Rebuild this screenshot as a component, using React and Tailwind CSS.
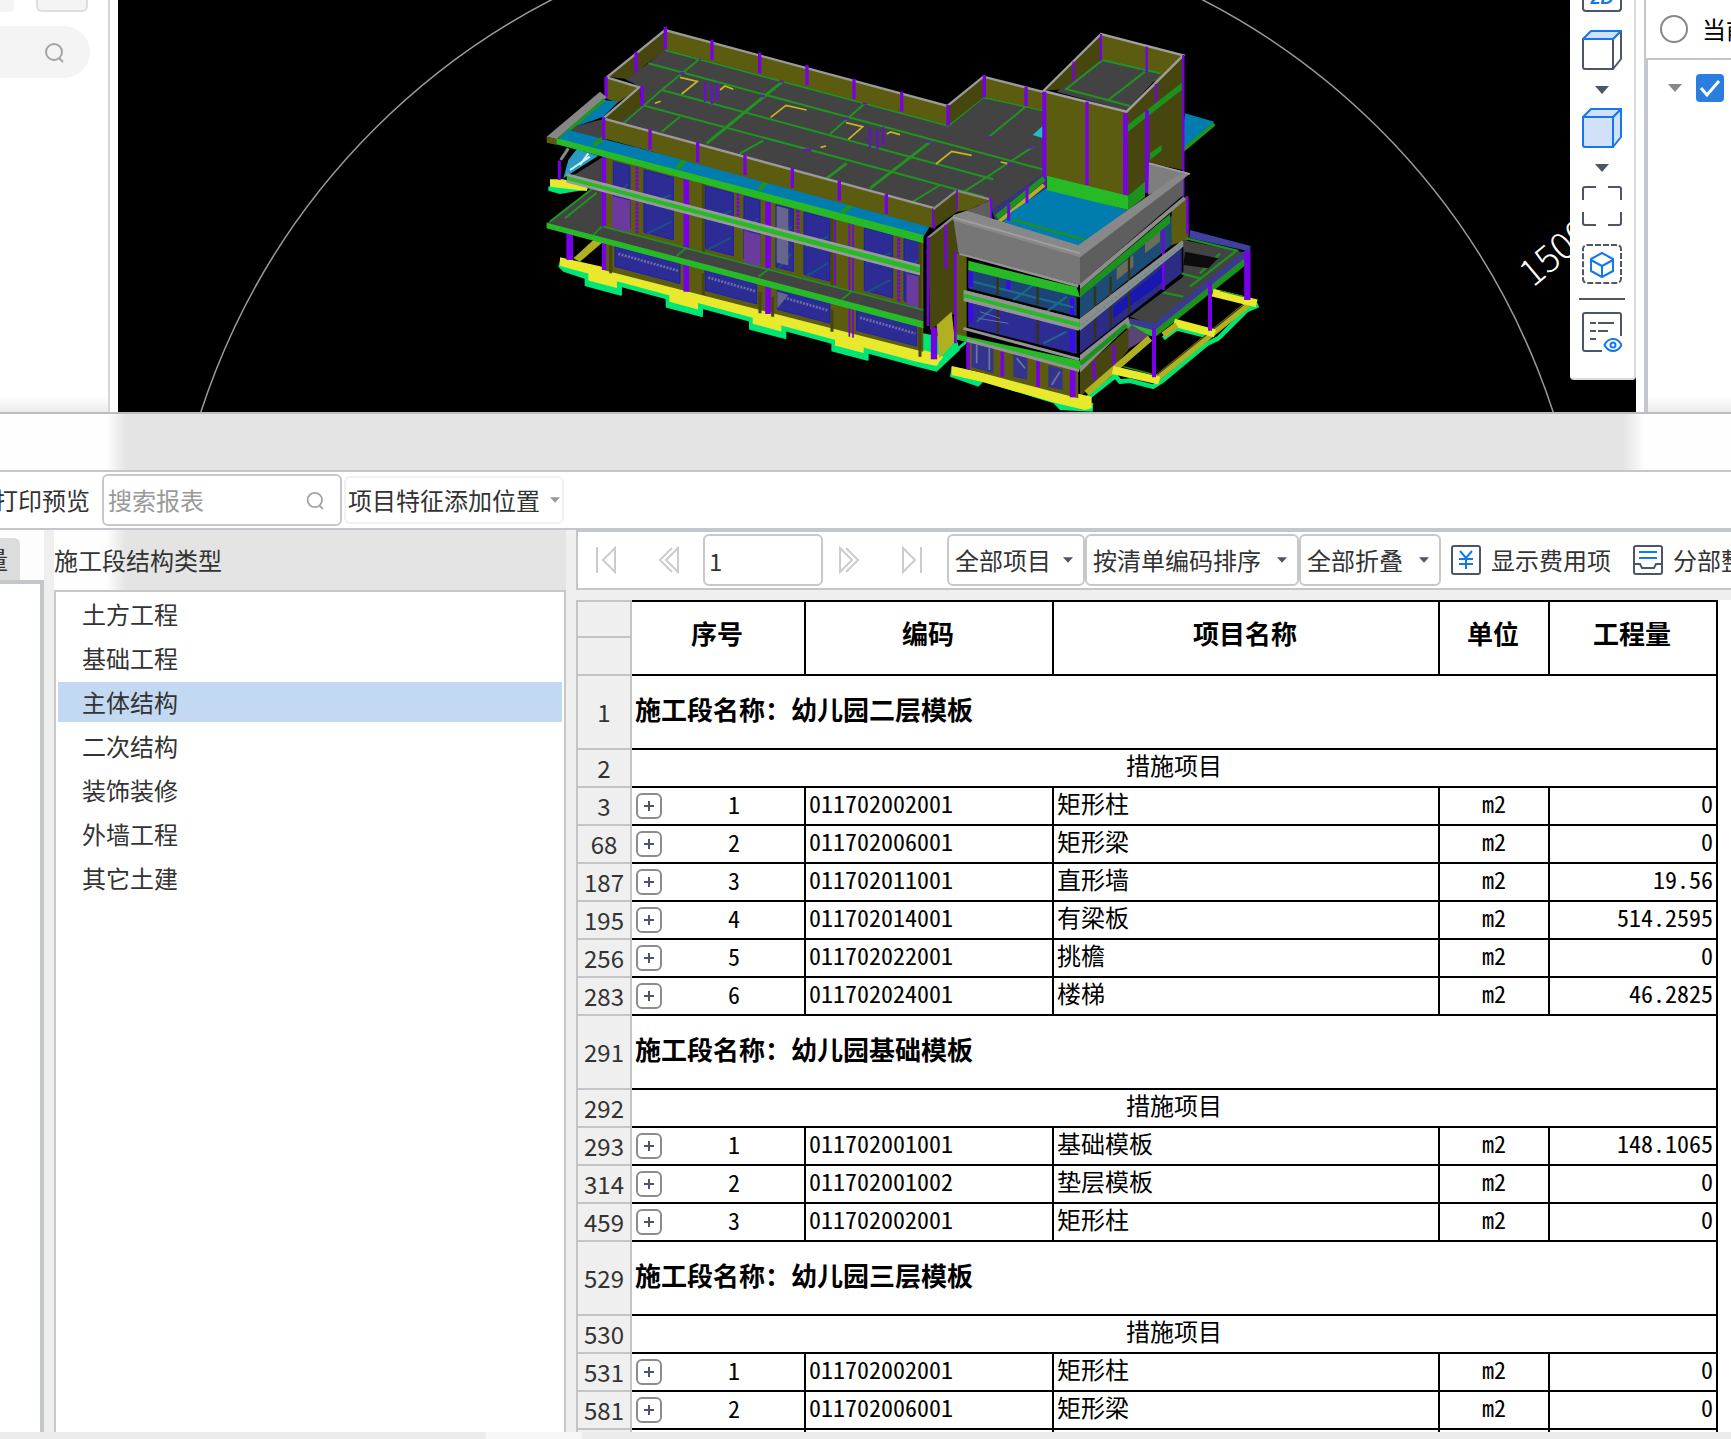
const RoofWalls = () => (
  <g>
    {/* main roof slab */}
    <polygon points="375,118 1225,345 1330,262 1515,300 1515,495 1360,600 1250,560 1180,600 200,330 305,285 300,230 255,207 325,160" fill="#434343" />
    <g stroke="#1f941f" strokeWidth="6" fill="none">
      <path d="M375,120 L1225,347 L1330,262 L1515,302" />
      <path d="M325,160 L1515,480" />
      <path d="M365,240 L1360,508" />
      <path d="M305,285 L1110,500 L1330,560" />
      <path d="M475,150 L365,240 L250,340" strokeWidth="5" />
      <path d="M420,320 L365,365" />
      <path d="M728,214 L500,400" strokeWidth="9" />
      <path d="M975,280 L870,372 M670,392 L600,430" />
      <path d="M920,460 L860,505 M1175,392 L990,535" strokeWidth="9" />
      <path d="M1455,292 L1345,382 M1480,410 L1250,560 M1200,525 L1110,580" />
    </g>
    <g stroke="#6a10c8" strokeWidth="7">
      <path d="M495,215 V275 M516,222 V282 M532,218 V270 M990,355 V412 M1012,360 V418 M1030,350 V405" />
      <path d="M420,190 h14 M660,258 h14 M718,214 h14 M912,326 h14 M968,280 h14 M790,420 h24 M1160,395 h14 M1342,382 h10 M1465,412 h14 M1400,460 h14 M476,146 h10" />
    </g>
    <g stroke="#c8b81c" strokeWidth="5" fill="none">
      <path d="M420,202 L472,214 L425,252 M540,240 L555,228 L580,238" />
      <path d="M692,322 L738,286 L800,300" />
      <path d="M918,338 L968,350 L925,388 M1040,372 L1052,366 L1080,374" />
      <path d="M345,280 L362,274 M842,412 L858,408 M1188,462 L1235,424 L1295,436 M1382,456 L1402,460" />
    </g>

    {/* parapets */}
    <polygon points="375,58 1222,288 1225,345 375,118" fill="#5c5c10" />
    <polygon points="375,60 375,120 262,207 200,200" fill="#46460e" />
    <polygon points="1222,288 1330,200 1333,260 1225,345" fill="#46460e" />
    <polygon points="1330,200 1515,245 1515,302 1333,260" fill="#5c5c10" />
    <polygon points="200,205 298,235 232,278 200,266" fill="#5c5c10" />
    <polygon points="105,350 175,268 235,275 190,320" fill="#007cae" />
    <polygon points="298,230 305,287 235,337 190,325" fill="#46460e" />
    <path d="M200,202 L375,60 L1222,288 L1330,200 L1515,247 M200,202 L298,232 L190,325" stroke="#9a9a9a" strokeWidth="7" fill="none" />
    <g stroke="#7800e8" strokeWidth="10">
      <path d="M376,50 V118 M516,90 V150 M659,128 V190 M801,166 V226 M942,206 V268 M1085,245 V305 M1224,285 V347 M1333,195 V262 M1458,230 V288" />
      <path d="M288,125 V185 M198,200 V266 M306,228 V288" />
    </g>
  </g>
);

// the facade falls off at this slope from left to right
const SLOPE = 0.264;

const upperWindows = [
  [220, 270],
  [312, 400],
  [495, 580],
  [612, 660],
  [708, 760],
  [792, 870],
  [973, 1058],
  [1092, 1140],
];
const lowerWindows = [
  [225, 420],
  [495, 650],
  [712, 870],
  [950, 1130],
];
const violetPanes = [
  [216, 270],
  [612, 662],
  [1100, 1140],
];
const footings = [145, 388, 638, 885];

const band = (x1, x2, top, bottom) =>
  `${x1},${top + SLOPE * x1} ${x2},${top + SLOPE * x2} ${x2},${bottom + SLOPE * x2} ${x1},${bottom + SLOPE * x1}`;

const Facade = () => (
  <g>
    {/* left balcony and stair */}
    <polygon points="100,350 200,325 200,390 80,362" fill="#434343" />
    <polygon points="180,245 200,262 50,388 20,380" fill="#868686" />
    <path d="M195,268 L58,385" stroke="#1f941f" strokeWidth="10" />
    <polygon points="20,380 52,388 52,405 20,398" fill="#5c5c10" />
    <polygon points="110,490 190,440 190,530 80,500" fill="#434343" />
    <polygon points="70,505 85,450 110,418 175,437 100,485" fill="#2a9cc4" />
    <path d="M120,465 L145,430 M90,480 L150,440" stroke="#d8f4ff" strokeWidth="6" />
    <path d="M62,450 L85,415" stroke="#8a8a8a" strokeWidth="9" />
    <polygon points="25,530 60,520 140,540 100,545 60,552 25,542" fill="#00e676" />
    <polygon points="30,508 70,508 145,530 140,543 30,530" fill="#e8e82c" />
    <polygon points="20,640 155,535 195,535 195,700 20,655" fill="#434343" />
    <path d="M30,635 L155,538 M75,625 L170,548" stroke="#1f941f" strokeWidth="6" />

    {/* foundation */}
    <polygon points="55,770 70,785 190,825 240,830 1130,1070 1190,1085 1260,1020 1250,990 60,750" fill="#00e676" />
    {footings.map((x) => (
      <polygon key={x} points={band(x - 8, x + 98, 745, 790)} fill="#00e676" stroke="#00e676" strokeWidth="6" strokeLinejoin="round" />
    ))}
    <polygon points="60,742 230,780 1180,1028 1210,1040 1190,1068 1130,1055 60,768" fill="#e8e82c" />
    {footings.map((x) => (
      <polygon key={x} points={band(x, x + 86, 735, 773)} fill="#e8e82c" />
    ))}
    <polygon points="100,745 160,690 190,695 120,755" fill="#b0b020" />

    {/* walls */}
    <polygon points="190,420 1150,680 1150,1025 190,780" fill="#5c5c10" />
    {upperWindows.map(([a, b]) => (
      <g key={a}>
        <polygon points={band(a, b, 397, 584)} fill="#2c2c94" stroke="#1c1cc0" strokeWidth="3" />
        <path d={`M${a + 6},${500 + SLOPE * a} L${b - 6},${450 + SLOPE * b}`} stroke="#1c5088" strokeWidth="6" />
        <path d={`M${a + 6},${590 + SLOPE * a} L${b - 6},${530 + SLOPE * b}`} stroke="#1c5088" strokeWidth="6" />
      </g>
    ))}
    {violetPanes.map(([a, b]) => (
      <polygon key={a} points={band(a, b, 500, 597)} fill="#6a3a9c" />
    ))}
    <polygon points={band(710, 745, 400, 570)} fill="#66668c" />
    {lowerWindows.map(([a, b]) => (
      <g key={a}>
        <polygon points={band(a, b, 650, 710)} fill="#2c2c94" stroke="#1c1cc0" strokeWidth="3" />
        <path d={`M${a + 10},${672 + SLOPE * a} L${b - 4},${672 + SLOPE * b}`} stroke="#6c6ca8" strokeWidth="8" strokeDasharray="6 4" />
      </g>
    ))}
    <polygon points="712,845 745,855 712,895" fill="#66668c" />
    <g stroke="#46460e" strokeWidth="9">
      <path d="M490,515 V730 M490,790 V855 M876,615 V830 M876,900 V965 M212,705 V790 M660,845 V910 M698,860 V920 M1140,690 V1040" />
    </g>
    <g stroke="#7800e8">
      <path d="M192,440 V780" strokeWidth="13" />
      <path d="M439,505 V845 M684,575 V912" strokeWidth="17" />
      <path d="M928,640 V980 M939,642 V983 M885,630 V825" strokeWidth="5" />
      <path d="M291,410 V670 M594,550 V620 M774,600 V670 M1076,625 V882" strokeWidth="9" strokeDasharray="9 3" />
      <path d="M89,668 V750" strokeWidth="20" />
      <path d="M58,452 V510" strokeWidth="9" />
    </g>

    {/* sun shade between floors */}
    <polygon points="80,492 1140,768 1140,795 80,515" fill="#27ba27" />
    <path d="M80,494 L1140,768 M80,514 L1140,792" stroke="#9a9a9a" strokeWidth="8" />

    {/* first floor canopy */}
    <polygon points="20,640 190,648 1150,898 1150,935 60,650" fill="#434343" />
    <path d="M190,650 L1150,900 M185,650 L160,675 M440,712 L410,738 M690,775 L655,800 M935,845 L905,868" stroke="#1f941f" strokeWidth="5" />
    <polygon points="20,638 1150,934 1150,955 20,655" fill="#27ba27" />

    {/* second floor canopy */}
    <polygon points="85,360 1175,640 1150,682 55,388" fill="#007cae" />
    <path d="M190,385 L160,405 M435,450 L410,475 M680,515 L655,540 M935,585 L905,608" stroke="#1f941f" strokeWidth="14" />
    <polygon points="50,384 1150,675 1150,700 50,403" fill="#27ba27" />

    {/* front parapet */}
    <polygon points="190,325 1180,597 1180,655 190,385" fill="#5c5c10" />
    <path d="M188,325 L1180,594" stroke="#9a9a9a" strokeWidth="7" />
    <g stroke="#7800e8" strokeWidth="10">
      <path d="M191,322 V390 M330,358 V418 M473,397 V457 M615,436 V496 M757,474 V534 M898,512 V572 M1039,552 V612 M1181,595 V655" />
    </g>
  </g>
);

const Annex = () => (
  <g transform="translate(1080 0)">
    {/* end wall of the long block */}
    <polygon points="100,597 170,540 172,605 105,652" fill="#46460e" />
    <polygon points="170,542 270,570 205,600 170,605" fill="#5c5c10" />
    <path d="M100,597 L170,542 L270,568" stroke="#8a8a8a" strokeWidth="7" fill="none" />
    <polygon points="85,690 160,615 178,640 178,900 90,960" fill="#46460e" />
    <path d="M82,685 L165,618" stroke="#8a8a8a" strokeWidth="7" />
    <polygon points="110,945 155,905 165,995 118,1045" fill="#b0b020" />
    <polygon points="165,730 200,740 200,985 165,985" fill="#5c5c10" />
    <path d="M118,1060 L200,995" stroke="#00e676" strokeWidth="8" />

    {/* tower */}
    <polygon points="855,310 943,335 840,425 785,408 850,350" fill="#007cae" />
    <path d="M943,342 L840,428 L785,412" stroke="#1f941f" strokeWidth="11" fill="none" />
    <polygon points="603,72 850,135 765,215 603,152" fill="#5c5c10" />
    <polygon points="603,74 603,152 495,238 430,242" fill="#46460e" />
    <polygon points="605,150 782,192 680,302 470,245" fill="#434343" />
    <path d="M495,236 L690,288 M735,185 L625,270 M605,150 L780,190 M605,152 L500,236" stroke="#1f941f" strokeWidth="6" />
    <polygon points="430,245 680,305 685,560 435,500" fill="#5c5c10" />
    <polygon points="680,305 850,135 850,480 748,460 738,520 683,560" fill="#46460e" />
    <polygon points="683,345 845,218 845,240 683,366" fill="#1d911d" />
    <polygon points="750,430 785,405 785,422 750,450" fill="#1d911d" />
    <path d="M430,243 L603,72 L850,136 L680,305 Z" stroke="#a0a0a0" strokeWidth="7" fill="none" />
    <polygon points="398,375 428,348 428,384" fill="#20c0c0" />
    <g stroke="#7800e8">
      <path d="M433,245 V540 M741,300 V550" strokeWidth="12" />
      <path d="M676,310 V558" strokeWidth="14" />
      <path d="M561,275 V525" strokeWidth="10" />
      <path d="M850,135 V560 M603,72 V152 M521,155 V212 M740,110 V186 M768,222 V276" strokeWidth="7" />
    </g>

    {/* terrace */}
    <polygon points="275,600 430,492 435,545 290,645" fill="#34347c" />
    <path d="M432,505 L290,622" stroke="#1d911d" strokeWidth="16" />
    <path d="M432,525 L285,645" stroke="#b0b020" strokeWidth="12" />
    <polygon points="440,535 683,600 535,712 300,645 335,605" fill="#007cae" />
    <path d="M335,628 L555,690" stroke="#1d911d" strokeWidth="7" />
    <polygon points="440,497 684,557 684,600 440,540" fill="#27ba27" />
    <polygon points="684,557 735,515 735,562 684,600" fill="#1d911d" />
    <path d="M326,582 V632 M381,530 V580 M272,565 V640" stroke="#7800e8" strokeWidth="9" />
    <polygon points="175,612 270,572 272,640" fill="#5e5e5e" />

    {/* side glazing */}
    <polygon points="540,850 835,600 835,690 540,925" fill="#1c4c74" />
    <polygon points="650,775 700,735 700,770 650,810" fill="#6c6c5c" />
    <polygon points="735,700 780,660 780,695 735,730" fill="#6c6c5c" />
    <polygon points="540,955 845,700 845,790 540,1030" fill="#2c2c84" />
    <polygon points="640,890 790,770 790,815 640,925" fill="#1818b0" />
    <path d="M585,830 V990 M632,800 V955 M687,740 V910" stroke="#34340e" strokeWidth="7" />
    <polygon points="815,592 862,556 866,690 815,705" fill="#5c5c10" />
    <path d="M862,560 V672 M790,630 V840" stroke="#7800e8" strokeWidth="8" />
    <polygon points="540,838 810,612 810,640 540,862" fill="#1d911d" />
    <polygon points="540,820 850,560 858,568 540,838" fill="#8c8c8c" />
    <polygon points="540,925 845,692 862,700 540,962" fill="#8c8c8c" />
    <path d="M545,945 L850,702" stroke="#20a0a0" strokeWidth="3" strokeDasharray="10 6" />

    {/* side pavement and porch */}
    <polygon points="690,920 850,800 850,690 1045,730 770,950" fill="#434343" />
    <path d="M860,685 L1010,722 L870,830 M845,790 L900,805 M790,848 L850,860 M960,730 L900,790" stroke="#1d911d" strokeWidth="7" fill="none" />
    <polygon points="855,725 955,745 925,775 850,765" fill="#0c0c0c" />
    <polygon points="870,660 1052,708 1040,722 868,684" fill="#4040a0" />
    <polygon points="1052,708 1050,735 765,965 680,938 690,925 762,940" fill="#3a3a94" />
    <polygon points="1050,732 1050,755 765,982 765,960" fill="#1d911d" />
    <polygon points="678,938 765,962 765,982 678,955" fill="#27ba27" />
    <polygon points="695,945 750,978 680,1020 640,1010" fill="#5c4474" />
    <polygon points="540,1085 685,955 685,1020 640,1075 540,1160" fill="#46460e" />
    <path d="M642,1005 V1070 M582,1055 V1110" stroke="#7800e8" strokeWidth="9" />
    <polygon points="540,1035 685,920 690,942 540,1088" fill="#8c8c8c" />
    <path d="M540,1062 L680,945" stroke="#1d911d" strokeWidth="14" />

    {/* porch footings */}
    <g fill="none" strokeLinejoin="round">
      <path d="M640,1090 L660,1115 L690,1112 L760,1130 L790,1110 L920,1002 L955,985 L1040,900 L1075,885" stroke="#00e676" strokeWidth="14" />
      <path d="M790,985 L830,955 L930,980 M555,1170 L650,1095" stroke="#00e676" strokeWidth="14" />
      <path d="M770,1105 L1045,882" stroke="#b0b020" strokeWidth="20" />
      <path d="M770,1095 L1030,885" stroke="#46460e" strokeWidth="4" />
      <path d="M560,1150 L750,985" stroke="#b0b020" strokeWidth="20" />
      <path d="M638,1080 L778,1112 M938,848 L1070,880 M822,938 L945,970" stroke="#e8e82c" strokeWidth="24" />
      <path d="M790,975 L830,945" stroke="#b0b020" strokeWidth="18" />
      <path d="M670,1070 L755,1092 M960,842 L1040,862" stroke="#1f941f" strokeWidth="4" />
    </g>
    <g stroke="#7800e8">
      <path d="M1042,725 V870" strokeWidth="19" />
      <path d="M930,820 V962 M762,955 V1102" strokeWidth="12" />
    </g>

    {/* front of the annex */}
    <polygon points="150,1100 155,1070 580,1180 578,1205 480,1200 460,1180 250,1115 235,1130" fill="#00e676" />
    <polygon points="155,1068 575,1160 575,1195 555,1200 470,1180 245,1115 155,1095" fill="#e8e82c" />
    <polygon points="200,980 535,1075 535,1165 205,1078" fill="#5c5c10" />
    <polygon points="215,1000 280,1015 280,1090 215,1072" fill="#34348c" />
    <polygon points="340,1030 382,1040 382,1110 340,1100" fill="#34348c" />
    <polygon points="445,1065 488,1078 488,1140 445,1130" fill="#34348c" />
    <path d="M230,1005 V1060 M268,1015 V1080 M350,1045 L375,1075 M455,1125 L480,1085" stroke="#7474a4" strokeWidth="5" />
    <path d="M204,985 V1078 M307,1025 V1100 M414,1050 V1130" stroke="#7800e8" strokeWidth="11" />
    <path d="M518,1080 V1162" stroke="#7800e8" strokeWidth="17" />
    <polygon points="205,775 530,855 530,918 205,835" fill="#1c4478" />
    <polygon points="205,868 530,955 530,1032 205,950" fill="#2c2c94" />
    <path d="M212,785 V830 M325,800 V845 M516,865 V915 M516,962 V1025 M212,880 V935" stroke="#3c08f0" strokeWidth="13" />
    <path d="M220,815 L520,892 M340,870 L400,825 M440,905 L500,860 M230,935 L290,885 M430,1000 L500,965" stroke="#1c6c88" strokeWidth="6" />
    <path d="M293,800 V855 M293,890 V970 M413,830 V885 M413,925 V1000" stroke="#34340e" strokeWidth="7" />
    <path d="M235,925 L325,940 M240,905 L300,925" stroke="#6c6ca8" strokeWidth="3" />
    <polygon points="190,840 540,928 540,960 190,872" fill="#27ba27" />
    <path d="M192,845 L538,933 M192,868 L538,957" stroke="#949494" strokeWidth="11" />
    <polygon points="165,972 540,1052 540,1078 165,988" fill="#27ba27" />
    <path d="M190,955 L538,1048 M200,990 L538,1082" stroke="#949494" strokeWidth="9" />
    <polygon points="205,752 530,832 540,862 205,780" fill="#27ba27" />
    <path d="M178,730 L535,828" stroke="#949494" strokeWidth="9" />

    {/* solid parapet */}
    <polygon points="747,458 870,490 835,515 745,555" fill="#7e7e7e" />
    <polygon points="160,625 540,735 540,825 175,728" fill="#767676" />
    <polygon points="540,735 850,502 850,555 540,822" fill="#5e5e5e" />
    <polygon points="160,615 200,602 535,706 683,600 835,495 872,490 540,742 160,632" fill="#888888" />
    <path d="M160,622 L540,730 M748,460 L870,492" stroke="#a0a0a0" strokeWidth="5" />

    <g stroke="#7800e8">
      <path d="M84,682 V948 M166,725 V1000 M137,645 V775" strokeWidth="8" />
      <path d="M102,952 V1048" strokeWidth="19" />
      <path d="M171,538 V600" strokeWidth="5" />
    </g>
  </g>
);

const Viewport = () => (
  <svg className="block h-full w-full" viewBox="118 0 1518 412" preserveAspectRatio="xMidYMid slice" role="img" aria-label="三维模型">
    <rect x="0" y="0" width="1731" height="412" fill="#000" />
    <circle cx="877" cy="632" r="711" fill="none" stroke="#9a9a9a" strokeWidth="1.5" />
    <text transform="translate(1533 288) rotate(-40)" fill="#fff" fontSize="37" fontWeight="300" fontFamily="'Noto Sans CJK SC', sans-serif">
      1500
    </text>
    <g transform="translate(540 10) scale(0.33333)">
      <RoofWalls />
      <Facade />
      <Annex />
    </g>
  </svg>
);

const SearchIcon = () => (
  <svg className="size-6" viewBox="0 0 24 24" fill="none" stroke="#a4a4a4" strokeWidth="2">
    <circle cx="12" cy="12" r="8" />
    <path d="M17 18l4 4" />
  </svg>
);

const Caret = ({ className }) => (
  <svg className={className} viewBox="0 0 14 8" fill="currentColor">
    <path d="M0 0h14L7 8z" />
  </svg>
);

const CubeIcon = ({ active }) => (
  <svg className="size-10" viewBox="0 0 40 40" fill="none" stroke={active ? "#1677e8" : "#4e5568"} strokeWidth="2" strokeLinejoin="round">
    <path d="M1 9h30v30H3a2 2 0 0 1-2-2z" fill={active ? "#d0e1f9" : "#fff"} />
    <path d="M31 9l8-8v28l-8 10z" fill={active ? "#d0e1f9" : "#fff"} />
    <path d="M1 9l8-8h30l-8 8z" fill="#d0e1f9" stroke="#1677e8" />
  </svg>
);

const ViewTools = () => (
  <div className="absolute top-0 right-0 flex h-[380px] w-[66px] flex-col items-center rounded-b border-r-2 border-b-2 border-[#dcdcdc] bg-white text-[#4e5568]">
    <button aria-label="二维" className="flex h-3 w-10 items-end justify-center overflow-hidden rounded-b border-2 border-t-0 border-[#4e5568]">
      <span className="pb-1 font-['Liberation_Sans'] text-lg leading-4 font-bold text-[#1677e8] italic">2D</span>
    </button>
    <button aria-label="线框视图" className="mt-[18px]"><CubeIcon /></button>
    <button aria-label="线框选项" className="mt-4"><Caret className="h-2 w-[14px]" /></button>
    <button aria-label="实体视图" className="mt-[14px]"><CubeIcon active /></button>
    <button aria-label="实体选项" className="mt-4"><Caret className="h-2 w-[14px]" /></button>
    <button aria-label="全屏" className="mt-[14px]">
      <svg className="size-10" viewBox="0 0 40 40" fill="none" stroke="currentColor" strokeWidth="2">
        <path d="M1 14V3a2 2 0 0 1 2-2h11M26 1h11a2 2 0 0 1 2 2v11M39 26v11a2 2 0 0 1-2 2H26M14 39H3a2 2 0 0 1-2-2V26" />
      </svg>
    </button>
    <button aria-label="选择构件" className="mt-[18px]">
      <svg className="size-10" viewBox="0 0 40 40" fill="none" stroke="currentColor" strokeWidth="2" strokeLinejoin="round">
        <rect x="1" y="1" width="38" height="38" rx="4" strokeDasharray="6 2" />
        <path d="M20 9l11 6v12l-11 6-11-6V15z" stroke="#1677e8" />
        <path d="M9 16l11 6 11-6M20 22v11" stroke="#1677e8" />
      </svg>
    </button>
    <div className="mt-[14px] h-0.5 w-[46px] bg-[#555]" />
    <button aria-label="显示设置" className="mt-3">
      <svg className="size-10" viewBox="0 0 40 40" fill="none" stroke="currentColor" strokeWidth="2">
        <path d="M39 24V3a2 2 0 0 0-2-2H3a2 2 0 0 0-2 2v34a2 2 0 0 0 2 2h17" />
        <path d="M8 11h6M16 11h16M8 19h6M16 19h10M8 27h6" />
        <path d="M22.500 33c4-8 13-8 17 0-4 8-13 8-17 0z" stroke="#1677e8" />
        <circle cx="31" cy="33" r="2.500" stroke="#1677e8" />
      </svg>
    </button>
  </div>
);

const ModelArea = () => (
  <section className="flex h-[412px] shrink-0 bg-white">
    <div className="flex w-[110px] shrink-0 flex-col border-r-2 border-[#d6d6d6] bg-[linear-gradient(#fff_calc(100%-16px),#ebebeb)]">
      <div className="flex h-3 justify-between pr-5">
        <span className="w-[14px] rounded-br bg-[#f4f4f4]" />
        <span className="w-[52px] rounded-b-md border-2 border-t-0 border-[#dedede] bg-[#f4f4f4]" />
      </div>
      <div className="mt-[14px] mr-[18px] flex h-[52px] items-center justify-end rounded-r-full bg-[#f4f4f4] pr-6">
        <button aria-label="搜索"><SearchIcon /></button>
      </div>
    </div>
    <div className="w-2 shrink-0 bg-white" />
    <div className="relative min-w-0 flex-1 bg-black">
      <Viewport />
      <ViewTools />
    </div>
    <div className="w-2 shrink-0 bg-white" />
    <div className="flex w-[87px] shrink-0 flex-col overflow-hidden border-l-2 border-[#c3c7cc] bg-white">
      <label className="flex h-[58px] shrink-0 items-center gap-[14px] pl-[14px] text-2xl whitespace-nowrap text-black">
        <input type="radio" name="scope" className="size-7 shrink-0 appearance-none rounded-full border-2 border-[#888]" />
        当前
      </label>
      <div className="flex flex-1 items-start gap-[14px] border-t-2 border-l-2 border-[#c3c7cc] bg-[linear-gradient(#fff_calc(100%-16px),#ebebeb)] pt-[14px] pl-5">
        <button aria-label="展开" className="mt-[10px] text-[#888]"><Caret className="h-2 w-[14px]" /></button>
        <label className="relative block size-7 shrink-0">
          <input type="checkbox" defaultChecked aria-label="全选" className="block size-7 appearance-none rounded-sm bg-[#2b7de0]" />
          <svg className="pointer-events-none absolute inset-0 size-7" viewBox="0 0 28 28" fill="none" stroke="#fff" strokeWidth="3">
            <path d="M5 14l6 7L23 7" />
          </svg>
        </label>
      </div>
    </div>
  </section>
);

const ReportToolbar = () => (
  <div className="flex h-[60px] shrink-0 items-center overflow-hidden border-y-2 border-[#c3c7cc] bg-white">
    <button className="-ml-1.5 shrink-0 whitespace-nowrap">打印预览</button>
    <label className="ml-3 flex h-[52px] w-60 shrink-0 items-center rounded-md border-2 border-[#c8c8c8] pr-3.5 pl-1">
      <input type="text" aria-label="搜索报表" placeholder="搜索报表" className="w-full min-w-0 outline-none placeholder:text-[#999]" />
      <SearchIcon />
    </label>
    <button className="ml-0.5 flex h-12 shrink-0 items-center gap-2.5 rounded-md border-2 border-[#f2f2f2] px-0.5 whitespace-nowrap">
      项目特征添加位置
      <Caret className="h-1.5 w-2.5 text-[#999]" />
    </button>
  </div>
);

const types = ["土方工程", "基础工程", "主体结构", "二次结构", "装饰装修", "外墙工程", "其它土建"];

const TypePanel = () => (
  <aside className="mx-2.5 flex w-[512px] shrink-0 flex-col">
    <h2 className="flex h-[60px] items-center bg-[linear-gradient(90deg,#fefefe_52px,#e4e4e4_72px)]">施工段结构类型</h2>
    <ul className="flex flex-1 flex-col gap-1 border-2 border-b-0 border-[#c8c8c8] bg-white p-0.5">
      {types.map((t) => (
        <li key={t}>
          <button className={`block h-10 w-full pl-6 text-left ${t === "主体结构" ? "bg-[#c2d9f1]" : ""}`}>{t}</button>
        </li>
      ))}
    </ul>
  </aside>
);

const Select = ({ label, value, className }) => (
  <label className={`relative block shrink-0 ${className}`}>
    <select aria-label={label} className="h-[52px] w-full appearance-none rounded-md border-2 border-[#c8c8c8] bg-white pl-1.5">
      <option>{value}</option>
    </select>
    <Caret className="pointer-events-none absolute top-[23px] right-3 h-1.5 w-2.5 text-[#4e5568]" />
  </label>
);

const PageButton = ({ label, d }) => (
  <button aria-label={label} className="shrink-0">
    <svg className="h-7 w-[22px]" viewBox="0 0 22 28" fill="none" stroke="#ccc" strokeWidth="2">
      <path d={d} />
    </svg>
  </button>
);

const TableToolbar = () => (
  <div className="flex h-[60px] shrink-0 items-center overflow-hidden border-y-2 border-l-2 border-[#c3c7cc] bg-white pl-[17px] whitespace-nowrap">
    <div className="flex shrink-0 gap-10">
      <PageButton label="首页" d="M2 1v26M20 2v24L8 14z" />
      <PageButton label="上一页" d="M21 2v24L9 14zM15 2L3 14l12 12" />
    </div>
    <input type="text" aria-label="页码" defaultValue="1" className="mr-4 ml-6 h-[52px] w-[120px] shrink-0 rounded-md border-2 border-[#c8c8c8] pl-1 outline-none" />
    <div className="flex shrink-0 gap-10">
      <PageButton label="下一页" d="M1 2v24l12-12zM7 2l12 12L7 26" />
      <PageButton label="末页" d="M2 2v24l12-12zM20 1v26" />
    </div>
    <Select label="项目范围" value="全部项目" className="ml-6 w-[138px]" />
    <Select label="排序方式" value="按清单编码排序" className="w-[214px]" />
    <Select label="折叠方式" value="全部折叠" className="w-[142px]" />
    <button className="ml-2.5 flex shrink-0 items-center gap-2.5">
      <svg className="size-[30px]" viewBox="0 0 30 30" fill="none" strokeWidth="2">
        <rect x="1" y="1" width="28" height="28" rx="2" stroke="#4e5568" />
        <path d="M9 6l6 7 6-7M15 13v11M8 14h14M8 19h14" stroke="#1677e8" />
      </svg>
      显示费用项
    </button>
    <button className="ml-[22px] flex shrink-0 items-center gap-2.5">
      <svg className="size-[30px]" viewBox="0 0 30 30" fill="none" strokeWidth="2">
        <rect x="1" y="1" width="28" height="28" rx="2" stroke="#4e5568" />
        <path d="M6 7h18M6 13h18" stroke="#1677e8" />
        <path d="M1 19h6l2 4h12l2-4h6" stroke="#4e5568" />
      </svg>
      分部整理
    </button>
  </div>
);

const groups = [
  {
    line: 1,
    name: "施工段名称：幼儿园二层模板",
    items: [
      [3, 1, "011702002001", "矩形柱", "0"],
      [68, 2, "011702006001", "矩形梁", "0"],
      [187, 3, "011702011001", "直形墙", "19.56"],
      [195, 4, "011702014001", "有梁板", "514.2595"],
      [256, 5, "011702022001", "挑檐", "0"],
      [283, 6, "011702024001", "楼梯", "46.2825"],
    ],
  },
  {
    line: 291,
    name: "施工段名称：幼儿园基础模板",
    items: [
      [293, 1, "011702001001", "基础模板", "148.1065"],
      [314, 2, "011702001002", "垫层模板", "0"],
      [459, 3, "011702002001", "矩形柱", "0"],
    ],
  },
  {
    line: 529,
    name: "施工段名称：幼儿园三层模板",
    items: [
      [531, 1, "011702002001", "矩形柱", "0"],
      [581, 2, "011702006001", "矩形梁", "0"],
    ],
  },
];

const LineNo = ({ children }) => (
  <th scope="row" className="border-x-2 border-b-2 border-[#c4c4c4] bg-[#efefef] p-0 text-center font-normal text-[#333]">
    {children}
  </th>
);

// digits in the sheet are half the width of a Chinese character
const Cell = ({ className = "", ...props }) => (
  <td className={`border-r-2 border-b-2 border-black p-0 px-[3px] pb-1.5 [font-feature-settings:'hwid'] ${className}`} {...props} />
);

const HeadCell = ({ children }) => (
  <th rowSpan={2} scope="col" className="border-y-2 border-r-2 border-black p-0 pr-0.5 pb-2.5 text-[26px] font-bold">
    {children}
  </th>
);

const Group = ({ group }) => (
  <tbody>
    <tr className="h-[74px]">
      <LineNo>{group.line}</LineNo>
      <Cell colSpan={5} className="text-[26px] font-bold">{group.name}</Cell>
    </tr>
    <tr className="h-[38px]">
      <LineNo>{group.line + 1}</LineNo>
      <Cell colSpan={5} className="text-center">措施项目</Cell>
    </tr>
    {group.items.map(([line, no, code, name, amount]) => (
      <tr key={line} className="h-[38px]">
        <LineNo>{line}</LineNo>
        <td className="border-r-2 border-b-2 border-black p-0 pl-1">
          <div className="flex h-[34px] items-center">
            <button aria-label="展开" className="flex size-[26px] items-center justify-center rounded-md border-2 border-[#8c8c8c] bg-white">
              <svg className="size-2.5" viewBox="0 0 10 10" stroke="#4e5568" strokeWidth="2">
                <path d="M5 0v10M0 5h10" />
              </svg>
            </button>
            <span className="flex-1 pb-1 pl-0.5 text-center [font-feature-settings:'hwid']">{no}</span>
          </div>
        </td>
        <Cell>{code}</Cell>
        <Cell>{name}</Cell>
        <Cell className="text-center">m2</Cell>
        <Cell className="text-right">{amount}</Cell>
      </tr>
    ))}
  </tbody>
);

const ReportTable = () => (
  <div className="mt-2.5 min-h-0 flex-1 overflow-hidden bg-white pr-[13px]">
    <table className="w-full table-fixed border-separate border-spacing-0 leading-[30px] text-black">
      <colgroup>
        <col className="w-14" />
        <col className="w-[174px]" />
        <col className="w-[248px]" />
        <col />
        <col className="w-[110px]" />
        <col className="w-[168px]" />
      </colgroup>
      <thead>
        <tr className="h-[38px]">
          <td className="border-2 border-[#c4c4c4] bg-[#efefef] p-0" />
          <HeadCell>序号</HeadCell>
          <HeadCell>编码</HeadCell>
          <HeadCell>项目名称</HeadCell>
          <HeadCell>单位</HeadCell>
          <HeadCell>工程量</HeadCell>
        </tr>
        <tr className="h-[38px]">
          <td className="border-x-2 border-b-2 border-[#c4c4c4] bg-[#efefef] p-0" />
        </tr>
      </thead>
      {groups.map((g) => (
        <Group key={g.line} group={g} />
      ))}
      <tbody>
        <tr className="h-[38px]">
          <LineNo />
          <Cell />
          <Cell />
          <Cell />
          <Cell />
          <Cell />
        </tr>
      </tbody>
    </table>
  </div>
);

const App = () => {
  return (
    <div className="flex h-screen flex-col overflow-hidden bg-[#efefef] font-['Noto_Sans_CJK_SC',sans-serif] text-2xl text-[#333]">
      <ModelArea />
      <div className="h-[58px] shrink-0 border-t-2 border-[#bcbcbc] bg-[linear-gradient(90deg,#fefefe_106px,#e4e4e4_126px,#e4e4e4_calc(100%-108px),#fefefe_calc(100%-86px))]" />
      <ReportToolbar />
      <main className="flex min-h-0 flex-1">
        <div className="flex w-11 shrink-0 flex-col bg-[#fdfdfd]">
          <div className="h-[50px] shrink-0 pt-2">
            <button className="flex h-[42px] w-5 items-center justify-end rounded-tr-md bg-[#dcdcdc] pr-3">量</button>
          </div>
          <div className="flex-1 border-t-4 border-r-4 border-[#c3c7cc] bg-white" />
        </div>
        <TypePanel />
        <div className="flex min-w-0 flex-1 flex-col">
          <TableToolbar />
          <ReportTable />
        </div>
      </main>
      <div className="flex h-[7px] shrink-0 bg-[#ececec] pl-[486px]">
        <div className="w-24 bg-[#f7f7f7]" />
      </div>
    </div>
  );
};

export default App;
